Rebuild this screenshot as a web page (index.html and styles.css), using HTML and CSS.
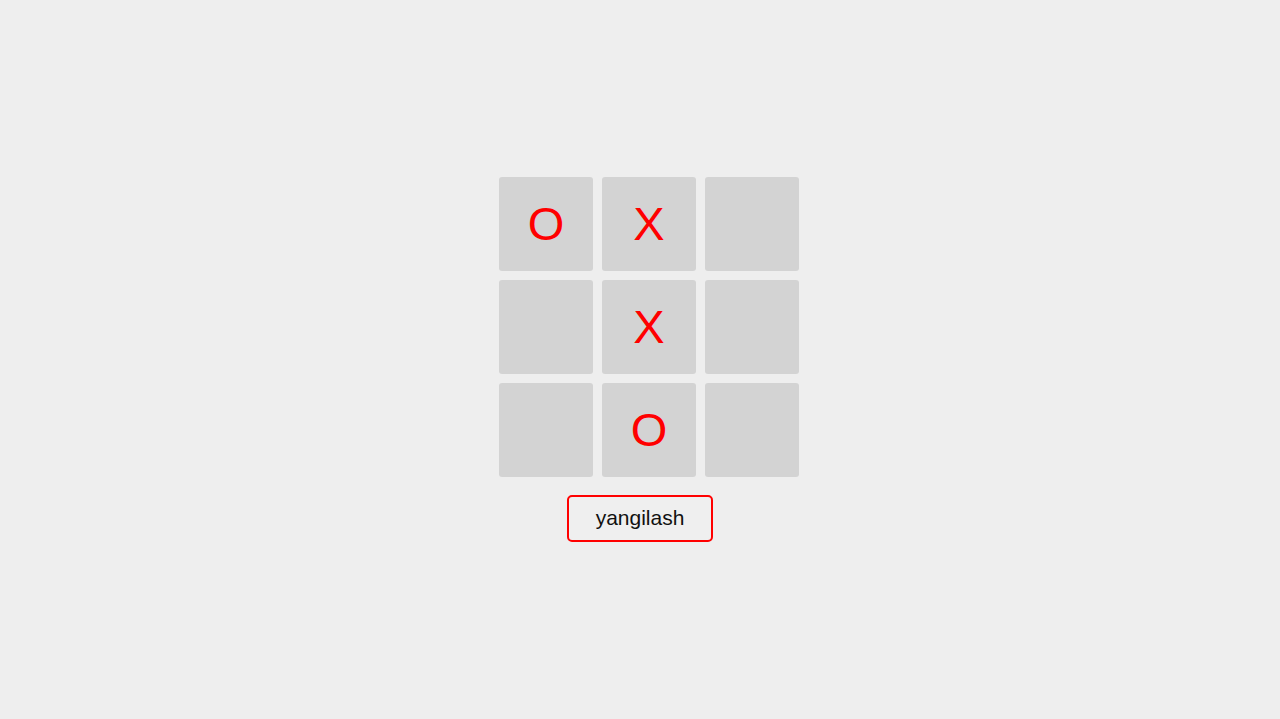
FILE: index.html
```html
<!DOCTYPE html>
<html lang="uz">
<head>
<meta charset="utf-8">
<meta name="viewport" content="width=device-width, initial-scale=1">
<title>Tic Tac Toe</title>
<link rel="stylesheet" href="styles.css">
</head>
<body>
<main class="game">
  <div class="board">
    <button class="cell" type="button">O</button>
    <button class="cell" type="button">X</button>
    <button class="cell" type="button" aria-label="3"></button>
    <button class="cell" type="button" aria-label="4"></button>
    <button class="cell" type="button">X</button>
    <button class="cell" type="button" aria-label="6"></button>
    <button class="cell" type="button" aria-label="7"></button>
    <button class="cell" type="button">O</button>
    <button class="cell" type="button" aria-label="9"></button>
  </div>
  <button class="reset" type="button">yangilash</button>
</main>
</body>
</html>
```
FILE: styles.css
```css
* {
  box-sizing: border-box;
}

body {
  margin: 0;
  background: #eeeeee;
  font-family: "Liberation Sans", Arial, sans-serif;
}

.game {
  min-height: 100vh;
  display: flex;
  flex-direction: column;
  align-items: center;
  justify-content: center;
  gap: 18px;
}

.board {
  display: grid;
  grid-template-columns: repeat(3, 94px);
  grid-auto-rows: 94px;
  gap: 9px;
  margin-left: 18px;
}

.cell {
  padding: 0 0 2px;
  border: 0;
  border-radius: 3px;
  background: #d3d3d3;
  color: #ff0000;
  font-family: inherit;
  font-size: 47px;
  line-height: 1;
  cursor: pointer;
}

.reset {
  padding: 8px 27px 10px;
  border: 2px solid #ff0000;
  border-radius: 5px;
  background: #efefef;
  color: #111111;
  font-family: inherit;
  font-size: 21px;
  line-height: 25px;
  cursor: pointer;
}
```
